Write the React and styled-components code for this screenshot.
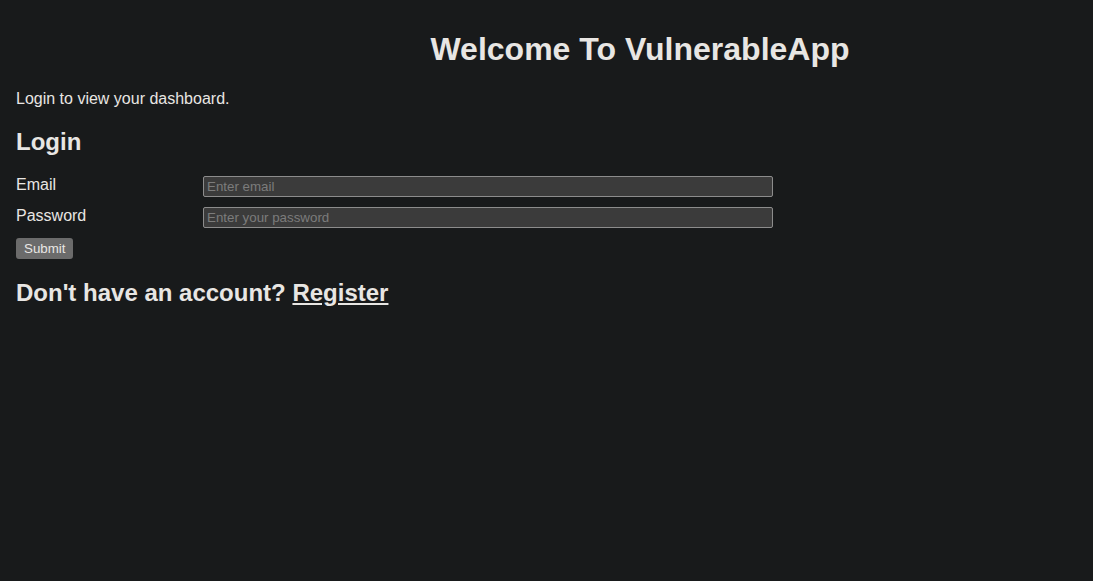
import React from "react";
import styled, { createGlobalStyle } from "styled-components";

const GlobalStyle = createGlobalStyle`
  html, body {
    background-color: #181a1b;
  }
  body {
    margin: 8px;
    color: #e8e6e3;
    font-family: "Liberation Sans", Arial, sans-serif;
  }
`;

const Page = styled.div`
  padding: 2px 8px 8px;
`;

const Title = styled.h1`
  font-size: 32px;
  margin: 21.44px 0;
  text-align: center;
  padding-left: 187px;
`;

const Intro = styled.p`
  font-size: 16px;
  margin: 16px 0;
`;

const Heading = styled.h2`
  font-size: 24px;
  margin: 19.92px 0;
`;

const Form = styled.form`
  display: flex;
  flex-direction: column;
  gap: 10px;
  align-items: flex-start;
`;

const Row = styled.div`
  display: flex;
  align-items: flex-start;
`;

const Label = styled.label`
  width: 187px;
  font-size: 16px;
  line-height: 18px;
`;

const Input = styled.input`
  width: 570px;
  height: 21px;
  box-sizing: border-box;
  padding: 1px 3px;
  background-color: #3b3b3b;
  border: 1px solid #8c8c8c;
  border-radius: 2px;
  color: #e8e6e3;
  font-family: "Liberation Sans", Arial, sans-serif;
  font-size: 13.33px;
  outline: none;

  &::placeholder {
    color: #7c7c7c;
  }
`;

const Button = styled.button`
  height: 21px;
  padding: 1px 6px;
  background-color: #6b6b6b;
  border: 2px solid #6b6b6b;
  border-radius: 3px;
  color: #e8e6e3;
  font-family: "Liberation Sans", Arial, sans-serif;
  font-size: 13.33px;
  line-height: 15px;
`;

const Link = styled.a`
  color: #e8e6e3;
  text-decoration: underline;
`;

const App = () => {
  return (
    <>
      <GlobalStyle />
      <Page>
        <Title>Welcome To VulnerableApp</Title>
        <Intro>Login to view your dashboard.</Intro>
        <Heading>Login</Heading>
        <Form onSubmit={(e) => e.preventDefault()}>
          <Row>
            <Label htmlFor="email">Email</Label>
            <Input id="email" type="email" placeholder="Enter email" />
          </Row>
          <Row>
            <Label htmlFor="password">Password</Label>
            <Input id="password" type="password" placeholder="Enter your password" />
          </Row>
          <Button type="submit">Submit</Button>
        </Form>
        <Heading>
          Don't have an account? <Link href="#register">Register</Link>
        </Heading>
      </Page>
    </>
  );
};

export default App;
